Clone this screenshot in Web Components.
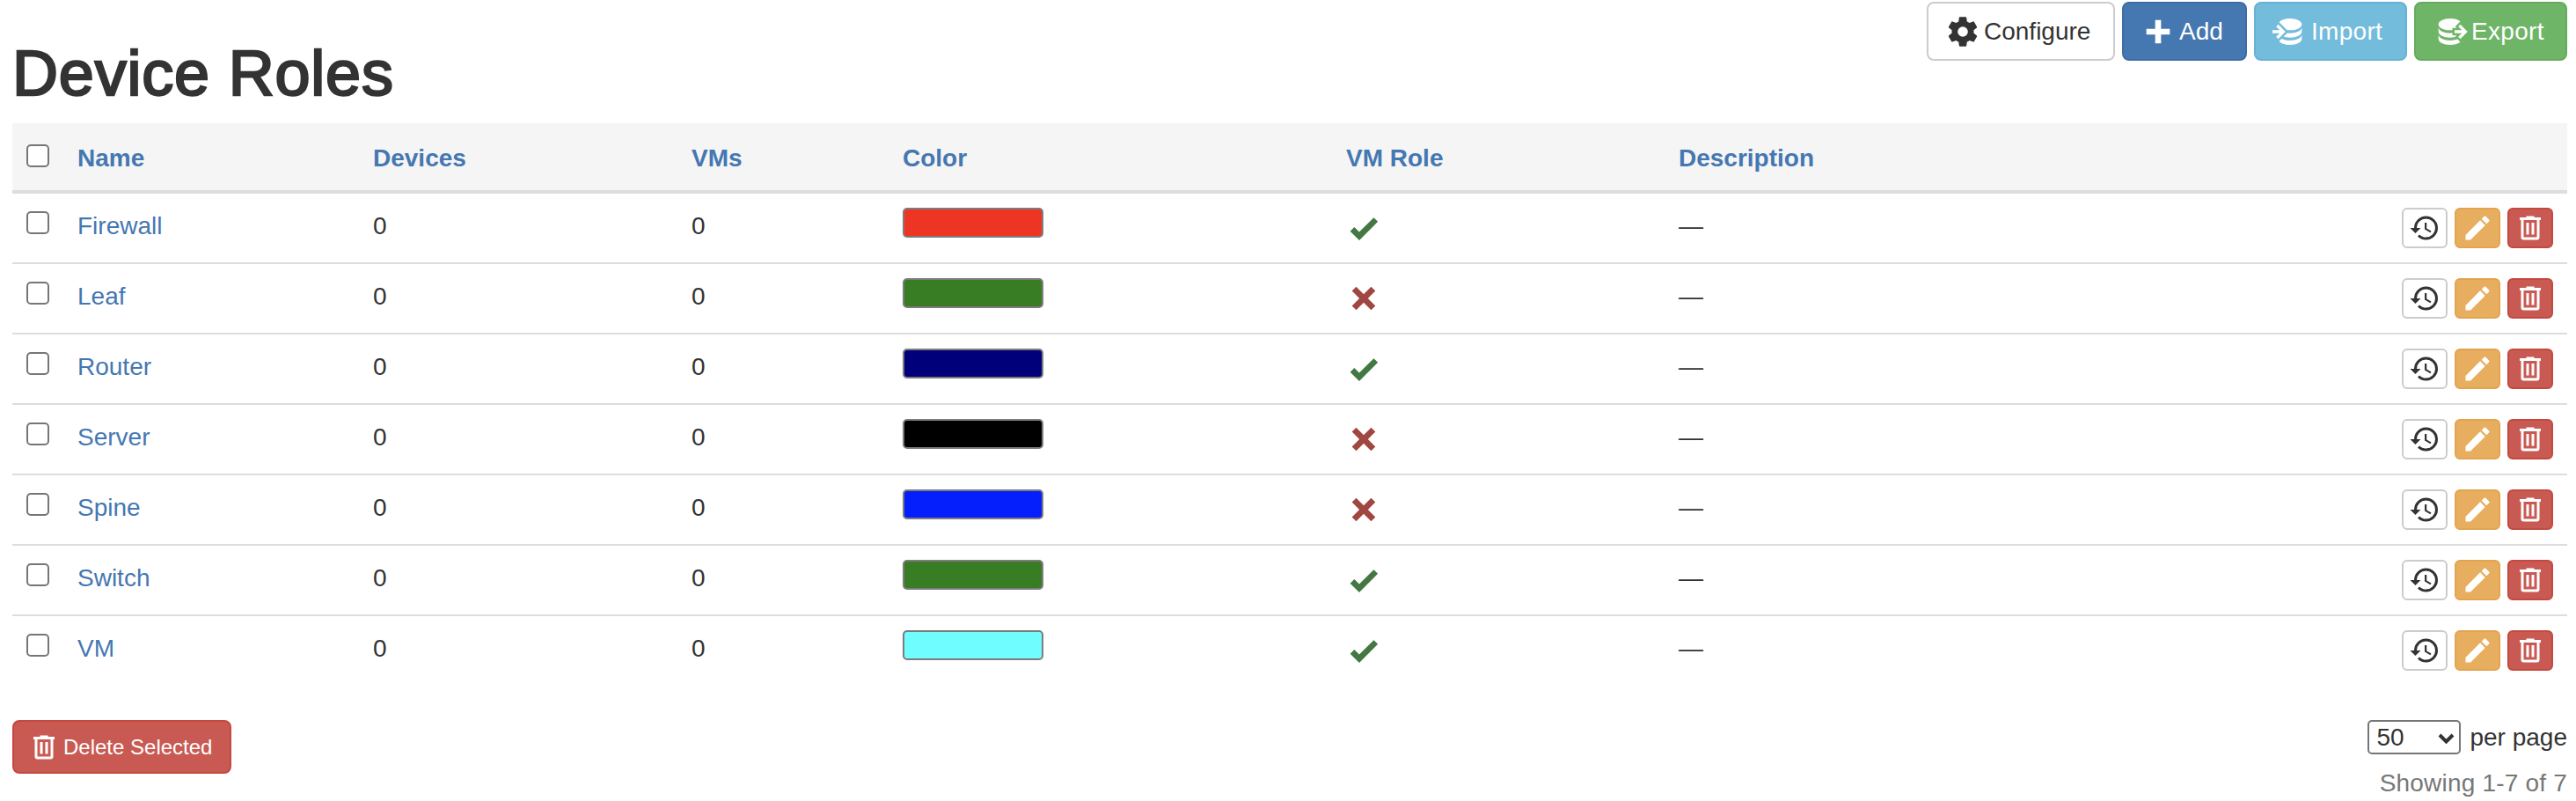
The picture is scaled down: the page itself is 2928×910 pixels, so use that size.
<!DOCTYPE html>
<html lang="en"><head><meta charset="utf-8"><title>Device Roles</title>
<style>
html,body{margin:0;padding:0;background:#fff;overflow:hidden}
body{font:28px/40px "Liberation Sans",Arial,sans-serif;color:#333}
</style></head><body>
<roles-page></roles-page>
<script>
const ICONS={
cog:"M12,15.5A3.5,3.5 0 0,1 8.5,12A3.5,3.5 0 0,1 12,8.5A3.5,3.5 0 0,1 15.5,12A3.5,3.5 0 0,1 12,15.5M19.43,12.97C19.47,12.65 19.5,12.33 19.5,12C19.5,11.67 19.47,11.34 19.43,11L21.54,9.37C21.73,9.22 21.78,8.95 21.66,8.73L19.66,5.27C19.54,5.05 19.27,4.96 19.05,5.05L16.56,6.05C16.04,5.66 15.5,5.32 14.87,5.07L14.5,2.42C14.46,2.18 14.25,2 14,2H10C9.75,2 9.54,2.18 9.5,2.42L9.13,5.07C8.5,5.32 7.96,5.66 7.44,6.05L4.95,5.05C4.73,4.96 4.46,5.05 4.34,5.27L2.34,8.73C2.21,8.95 2.27,9.22 2.46,9.37L4.57,11C4.53,11.34 4.5,11.67 4.5,12C4.5,12.33 4.53,12.65 4.57,12.97L2.46,14.63C2.27,14.78 2.21,15.05 2.34,15.27L4.34,18.73C4.46,18.95 4.73,19.03 4.95,18.95L7.44,17.94C7.96,18.34 8.5,18.68 9.13,18.93L9.5,21.58C9.54,21.82 9.75,22 10,22H14C14.25,22 14.46,21.82 14.5,21.58L14.87,18.93C15.5,18.67 16.04,18.34 16.56,17.94L19.05,18.95C19.27,19.03 19.54,18.95 19.66,18.73L21.66,15.27C21.78,15.05 21.73,14.78 21.54,14.63L19.43,12.97Z",
plus:"M20 14H14V20H10V14H4V10H10V4H14V10H20V14Z",
imp:"M12,3C8.59,3 5.69,4.07 4.54,5.57L9.79,10.82C10.5,10.93 11.22,11 12,11C16.42,11 20,9.21 20,7C20,4.79 16.42,3 12,3M3.92,7.08L2.5,8.5L5,11H0V13H5L2.5,15.5L3.92,16.92L8.84,12M20,9C20,11.21 16.42,13 12,13C11.34,13 10.7,12.95 10.09,12.87L7.62,15.34C8.88,15.75 10.38,16 12,16C16.42,16 20,14.21 20,12M20,14C20,16.21 16.42,18 12,18C9.72,18 7.67,17.5 6.21,16.75L4.53,18.43C5.68,19.93 8.59,21 12,21C16.42,21 20,19.21 20,17",
exp:"M12,3C7.58,3 4,4.79 4,7C4,9.21 7.58,11 12,11C12.5,11 13,10.97 13.5,10.92V9.5H16.39L15.39,8.5L18.9,5C17.5,3.8 14.94,3 12,3M18.92,7.08L17.5,8.5L20,11H15V13H20L17.5,15.5L18.92,16.92L23.84,12M4,9V12C4,14.21 7.58,16 12,16C13.17,16 14.26,15.85 15.25,15.63L16.38,14.5H13.5V12.92C13,12.97 12.5,13 12,13C7.58,13 4,11.21 4,9M4,14V17C4,19.21 7.58,21 12,21C14.94,21 17.5,20.2 18.9,19L17,17.12C15.73,17.67 13.95,18 12,18C7.58,18 4,16.21 4,14Z",
history:"M13.5,8H12V13L16.28,15.54L17,14.33L13.5,12.25V8M13,3A9,9 0 0,0 4,12H1L4.96,16.03L9,12H6A7,7 0 0,1 13,5A7,7 0 0,1 20,12A7,7 0 0,1 13,19C11.07,19 9.32,18.21 8.06,16.94L6.64,18.36C8.27,20 10.5,21 13,21A9,9 0 0,0 22,12A9,9 0 0,0 13,3",
pencil:"M20.71,7.04C21.1,6.65 21.1,6 20.71,5.63L18.37,3.29C18,2.9 17.35,2.9 16.96,3.29L15.12,5.12L18.87,8.87M3,17.25V21H6.75L17.81,9.93L14.06,6.18L3,17.25Z",
trash:"M9,3V4H4V6H5V19A2,2 0 0,0 7,21H17A2,2 0 0,0 19,19V6H20V4H15V3H9M7,6H17V19H7V6M9,8V17H11V8H9M13,8V17H15V8H13Z",
check:"M9,20.42L2.79,14.21L5.62,11.38L9,14.77L18.88,4.88L21.71,7.71L9,20.42Z",
close:"M20 6.91L17.09 4L12 9.09L6.91 4L4 6.91L9.09 12L4 17.09L6.91 20L12 14.91L17.09 20L20 17.09L14.91 12L20 6.91Z"};

class MdiIcon extends HTMLElement{
  connectedCallback(){
    if(this.shadowRoot)return;
    const s=this.getAttribute('size')||40;
    this.attachShadow({mode:'open'}).innerHTML=`<style>:host{display:inline-flex;flex:none;width:${s}px;height:${s}px}svg{display:block;width:100%;height:100%;fill:currentColor}</style><svg viewBox="0 0 24 24" aria-hidden="true"><path d="${ICONS[this.getAttribute('name')]}"/></svg>`;
  }
}
customElements.define('mdi-icon',MdiIcon);

const VARIANTS={
 def:['#fff','#ccc','#333'],
 primary:['#4577b1','#3f6da2','#fff'],
 info:['#73bcdc','#66b2d6','#fff'],
 success:['#6fb568','#65ab5e','#fff'],
 warning:['#e8ae5f','#e3a450','#fff'],
 danger:['#c85a53','#c4493f','#fff']};

class UiButton extends HTMLElement{
  connectedCallback(){
    if(this.shadowRoot)return;
    const [bg,bd,fg]=VARIANTS[this.getAttribute('variant')||'def'];
    const icon=this.getAttribute('icon');
    this.attachShadow({mode:'open'}).innerHTML=`<style>
      :host{display:inline-flex;align-items:center;box-sizing:border-box;height:67px;padding:0 0 0 24px;
        background:${bg};border:2px solid ${bd};border-radius:8px;color:${fg};font-size:28px;line-height:40px;white-space:nowrap;
        width:${this.getAttribute('width')}px;letter-spacing:${this.getAttribute('track')||0}px}
      mdi-icon{margin:0 4px 0 -5px}
    </style><mdi-icon name="${icon}"></mdi-icon><slot></slot>`;
  }
}
customElements.define('ui-button',UiButton);

class IconButton extends HTMLElement{
  connectedCallback(){
    if(this.shadowRoot)return;
    const [bg,bd,fg]=VARIANTS[this.getAttribute('variant')||'def'];
    this.attachShadow({mode:'open'}).innerHTML=`<style>
      :host{display:inline-flex;align-items:center;justify-content:center;box-sizing:border-box;width:52px;height:46px;
        background:${bg};border:2px solid ${bd};border-radius:6px;color:${fg}}
    </style><mdi-icon name="${this.getAttribute('icon')}" size="36"></mdi-icon>`;
  }
}
customElements.define('icon-button',IconButton);

class PageHeader extends HTMLElement{
  constructor(){super();this.attachShadow({mode:'open'}).innerHTML=`<style>
    :host{display:flow-root}
    .tools{float:right;display:flex;gap:8px;margin-top:2px}
    h1{margin:44px 0 17px;font:normal 72px/79px "Liberation Sans",Arial,sans-serif;color:#333;-webkit-text-stroke:2.4px #333;letter-spacing:.8px}
  </style><div class="tools"><slot name="tools"></slot></div><h1><slot></slot></h1>`;}
}
customElements.define('page-header',PageHeader);

const ROWS=[["Firewall","#ee3524",1],["Leaf","#387c23",0],["Router","#00007a",1],["Server","#000000",0],["Spine","#041ffb",0],["Switch","#387c23",1],["VM","#70fdff",1]];

class RolesTable extends HTMLElement{
  constructor(){super();
    const heads=["Name","Devices","VMs","Color","VM Role","Description"];
    const row=([n,c,vm])=>`<tr>
      <td><input type="checkbox" aria-label="Select ${n}"></td>
      <td class="t"><a>${n}</a></td><td class="t">0</td><td class="t">0</td>
      <td><span class="swatch" style="background:${c}"></span></td>
      <td><mdi-icon class="bool ${vm?'yes':'no'}" name="${vm?'check':'close'}"></mdi-icon></td>
      <td class="t">—</td>
      <td><div class="acts"><icon-button icon="history"></icon-button><icon-button variant="warning" icon="pencil"></icon-button><icon-button variant="danger" icon="trash"></icon-button></div></td>
    </tr>`;
    this.attachShadow({mode:'open'}).innerHTML=`<style>
      :host{display:block;font-size:28px;line-height:40px;color:#333}
      table{width:100%;table-layout:fixed;border-collapse:separate;border-spacing:0}
      th{background:#f5f5f5;border-bottom:4px solid #ddd;padding:20px 16px 16px;text-align:left;font-weight:bold;color:#4577b1;vertical-align:top}
      td{padding:16px;border-bottom:2px solid #ddd;vertical-align:top;height:46px}
      td.t{padding:17px 16px 15px}
      tr:last-child td{border-bottom:0}
      a{color:#4577b1}
      input{appearance:none;display:block;box-sizing:border-box;width:26px;height:26px;margin:4px 0 0;background:#fff;border:2px solid #767676;border-radius:5px}
      .swatch{display:block;box-sizing:border-box;width:160px;height:34px;border:2px solid #7c7c7c;border-radius:5px}
      .bool{display:block;margin-top:3px}
      .yes{color:#437843}.no{color:#a04741}
      .acts{display:flex;justify-content:flex-end;gap:8px}
    </style><table>
      <colgroup><col style="width:58px"><col style="width:336px"><col style="width:362px"><col style="width:240px"><col style="width:504px"><col style="width:378px"><col><col style="width:240px"></colgroup>
      <thead><tr><th><input type="checkbox" aria-label="Select all"></th>${heads.map(h=>`<th>${h}</th>`).join('')}<th></th></tr></thead>
      <tbody>${ROWS.map(row).join('')}</tbody></table>`;
  }
}
customElements.define('roles-table',RolesTable);

class PerPage extends HTMLElement{
  constructor(){super();this.attachShadow({mode:'open'}).innerHTML=`<style>
    :host{display:block;text-align:right;font-size:28px;line-height:40px;color:#333}
    .line{display:flex;justify-content:flex-end;align-items:center;gap:10px;height:39px}
    .sel{position:relative;display:block;width:106px;height:39px}
    select{appearance:none;display:block;box-sizing:border-box;width:100%;height:100%;margin:0;padding:0 0 0 8px;background:#fff;
      border:2px solid #767676;border-radius:5px;font:28px "Liberation Sans",Arial,sans-serif;color:#333}
    svg{position:absolute;right:7px;top:14px;width:19px;height:13px;fill:none;stroke:#333;stroke-width:4;pointer-events:none}
    .count{margin-top:13px;color:#777;letter-spacing:.2px}
  </style><div class="line"><span class="sel"><select aria-label="Per page"><option>25</option><option selected>50</option><option>100</option></select>
  <svg viewBox="0 0 19 13"><path d="M2 3l7.5 7.5L17 3"/></svg></span><span>per page</span></div>
  <div class="count"><slot></slot></div>`;}
}
customElements.define('per-page',PerPage);

class DeleteSelected extends HTMLElement{
  constructor(){super();const [bg,bd,fg]=VARIANTS.danger;this.attachShadow({mode:'open'}).innerHTML=`<style>
    :host{display:inline-flex;align-items:center;gap:4px;box-sizing:border-box;height:61px;padding:0 20px 0 16px;background:${bg};border:2px solid ${bd};border-radius:8px;color:${fg};font-size:24px;line-height:34px}
  </style><mdi-icon name="trash" size="36"></mdi-icon><span>Delete Selected</span>`;}
}
customElements.define('delete-selected',DeleteSelected);

class RolesPage extends HTMLElement{
  constructor(){super();this.attachShadow({mode:'open'}).innerHTML=`<style>
    :host{display:block;padding:0 10px 0 14px}
    .foot{display:flex;justify-content:space-between;align-items:flex-start;margin-top:40px}
  </style>
  <page-header>Device Roles
    <ui-button slot="tools" icon="cog" width="214">Configure</ui-button>
    <ui-button slot="tools" variant="primary" icon="plus" width="142">Add</ui-button>
    <ui-button slot="tools" variant="info" icon="imp" width="174" track=".3">Import</ui-button>
    <ui-button slot="tools" variant="success" icon="exp" width="174" track=".3">Export</ui-button>
  </page-header>
  <roles-table></roles-table>
  <div class="foot">
    <delete-selected></delete-selected>
    <per-page>Showing 1-7 of 7</per-page>
  </div>`;}
}
customElements.define('roles-page',RolesPage);
</script>
</body></html>
